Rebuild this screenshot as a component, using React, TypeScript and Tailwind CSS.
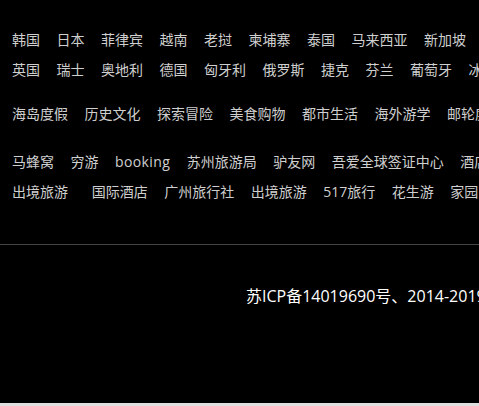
const rows1 = [
  ['韩国', '日本', '菲律宾', '越南', '老挝', '柬埔寨', '泰国', '马来西亚', '新加坡', '印度尼西亚'],
  ['英国', '瑞士', '奥地利', '德国', '匈牙利', '俄罗斯', '捷克', '芬兰', '葡萄牙', '冰岛'],
]
const themes = ['海岛度假', '历史文化', '探索冒险', '美食购物', '都市生活', '海外游学', '邮轮度假']
const friends = [
  ['马蜂窝', '穷游', 'booking', '苏州旅游局', '驴友网', '吾爱全球签证中心', '酒店预订'],
  ['出境旅游\u00a0\u00a0', '国际酒店', '广州旅行社', '出境旅游', '517旅行', '花生游', '家园'],
]

function Row({ items }: { items: string[] }) {
  return (
    <div className="flex whitespace-nowrap pl-3 h-[30px] items-center">
      {items.map((t, i) => (
        <a
          key={i}
          className={`mr-[16.5px] shrink-0 text-[14px] text-[#cfcfcf] ${t === 'booking' ? 'tracking-[0.4px]' : ''}`}
        >
          {t}
        </a>
      ))}
    </div>
  )
}

export default function App() {
  return (
    <div
      className="w-[479px] h-[406px] overflow-hidden bg-[#dedede]"
      style={{ fontFamily: '"Open Sans", "Noto Sans CJK SC", sans-serif' }}
    >
      <div className="h-[403px] bg-black overflow-hidden">
        <div className="pt-[24px]">
          {rows1.map((r, i) => (
            <Row key={i} items={r} />
          ))}
        </div>
        <div className="mt-[14px]">
          <Row items={themes} />
        </div>
        <div className="mt-[18px]">
          {friends.map((r, i) => (
            <Row key={i} items={r} />
          ))}
        </div>
        <div className="mt-[38px] border-t border-[#444]" />
        <div className="mt-[40px] pl-[246px] whitespace-nowrap text-[16px] text-white leading-[22px]">
          苏ICP备14019690号、2014-2019 版权所有
        </div>
      </div>
    </div>
  )
}
